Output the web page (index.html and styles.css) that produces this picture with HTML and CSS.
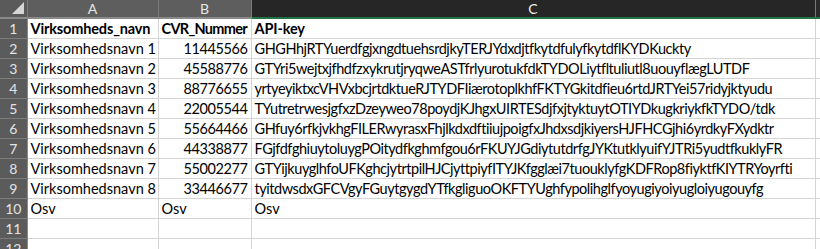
FILE: index.html
```html
<!DOCTYPE html>
<html>
<head>
<meta charset="utf-8">
<link rel="stylesheet" href="styles.css">
</head>
<body>
<table class="sheet">
  <colgroup>
    <col class="c-rh"><col class="c-a"><col class="c-b"><col class="c-c"><col class="c-d">
  </colgroup>
  <thead>
    <tr class="colhead">
      <th class="corner"><span class="tri"></span></th>
      <th>A</th><th>B</th><th class="sel">C</th><th class="partial"></th>
    </tr>
  </thead>
  <tbody>
    <tr><th>1</th><td class="b">Virksomheds_navn</td><td class="b tight">CVR_Nummer</td><td class="b">API-key</td><td></td></tr>
    <tr><th>2</th><td>Virksomhedsnavn 1</td><td class="num">11445566</td><td class="key">GHGHhjRTYuerdfgjxngdtuehsrdjkyTERJYdxdjtfkytdfulyfkytdflKYDKuckty</td><td></td></tr>
    <tr><th>3</th><td>Virksomhedsnavn 2</td><td class="num">45588776</td><td class="key">GTYri5wejtxjfhdfzxykrutjryqweASTfrlyurotukfdkTYDOLiytfltuliutl8uouyflægLUTDF</td><td></td></tr>
    <tr><th>4</th><td>Virksomhedsnavn 3</td><td class="num">88776655</td><td class="key">yrtyeyiktxcVHVxbcjrtdktueRJTYDFIiærotoplkhfFKTYGkitdfieu6rtdJRTYei57ridyjktyudu</td><td></td></tr>
    <tr><th>5</th><td>Virksomhedsnavn 4</td><td class="num">22005544</td><td class="key">TYutretrwesjgfxzDzeyweo78poydjKJhgxUIRTESdjfxjtyktuytOTIYDkugkriykfkTYDO/tdk</td><td></td></tr>
    <tr><th>6</th><td>Virksomhedsnavn 5</td><td class="num">55664466</td><td class="key">GHfuy6rfkjvkhgFILERwyrasxFhjlkdxdftiiujpoigfxJhdxsdjkiyersHJFHCGjhi6yrdkyFXydktr</td><td></td></tr>
    <tr><th>7</th><td>Virksomhedsnavn 6</td><td class="num">44338877</td><td class="key">FGjfdfghiuytoluygPOitydfkghmfgou6rFKUYJGdiytutdrfgJYKtutklyuifYJTRi5yudtfkuklyFR</td><td></td></tr>
    <tr><th>8</th><td>Virksomhedsnavn 7</td><td class="num">55002277</td><td class="key">GTYijkuyglhfoUFKghcjytrtpilHJCjyttpiyfITYJKfgglæi7tuouklyfgKDFRop8fiyktfKIYTRYoyrfti</td><td></td></tr>
    <tr><th>9</th><td>Virksomhedsnavn 8</td><td class="num">33446677</td><td class="key">tyitdwsdxGFCVgyFGuytgygdYTfkgliguoOKFTYUghfypolihglfyoyugiyoiyugloiyugouyfg</td><td></td></tr>
    <tr><th>10</th><td>Osv</td><td>Osv</td><td>Osv</td><td></td></tr>
    <tr><th>11</th><td></td><td></td><td></td><td></td></tr>
    <tr><th>12</th><td></td><td></td><td></td><td></td></tr>
  </tbody>
</table>
</body>
</html>
```

FILE: styles.css
```css
html, body {
  margin: 0;
  padding: 0;
  background: #ffffff;
  overflow: hidden;
}
.sheet {
  border-collapse: collapse;
  table-layout: fixed;
  width: 826px;
  font-family: Lato, "Open Sans", "Liberation Sans", sans-serif;
  font-size: 14.5px;
  color: #000;
}
.c-rh { width: 27px; }
.c-a { width: 131px; }
.c-b { width: 93px; }
.c-c { width: 564px; }
.c-d { width: 11px; }

.sheet td {
  height: 19px;
  padding: 0 0 0 3px;
  border-right: 1px solid #d4d4d4;
  border-bottom: 1px solid #d4d4d4;
  white-space: nowrap;
  overflow: hidden;
  line-height: 19px;
  vertical-align: bottom;
}
.sheet td.num {
  text-align: right;
  padding: 0 3px 0 0;
  letter-spacing: -0.4px;
}
.sheet td.key {
  letter-spacing: -0.45px;
}
.sheet td.b {
  font-weight: bold;
  letter-spacing: -0.15px;
}
.sheet td.b.tight {
  letter-spacing: -0.7px;
}
.sheet tbody th {
  background: #5b5b5b;
  color: #e3e3e3;
  font-weight: normal;
  font-size: 14px;
  text-align: center;
  padding: 0;
  border-right: 1px solid #8a8a8a;
  border-bottom: 1px solid #7c7c7c;
  line-height: 19px;
  height: 19px;
}
.colhead th {
  height: 17px;
  background: #5e5e5e;
  color: #e6e6e6;
  font-weight: normal;
  font-size: 14px;
  line-height: 17px;
  padding: 0;
  text-align: center;
  border-right: 1px solid #7a7a7a;
  border-bottom: 2px solid #8a8a8a;
}
.colhead th.sel {
  background: #262626;
  color: #f0f0f0;
  border-bottom: 2px solid #217346;
}
.colhead th.partial {
  background: #2a2a2a;
  border-bottom-color: #217346;
}
.colhead th.corner {
  position: relative;
  background: #5a5a5a;
}
.tri {
  position: absolute;
  right: 3px;
  bottom: 3px;
  width: 0;
  height: 0;
  border-left: 12px solid transparent;
  border-bottom: 12px solid #d6d6d6;
}
```
